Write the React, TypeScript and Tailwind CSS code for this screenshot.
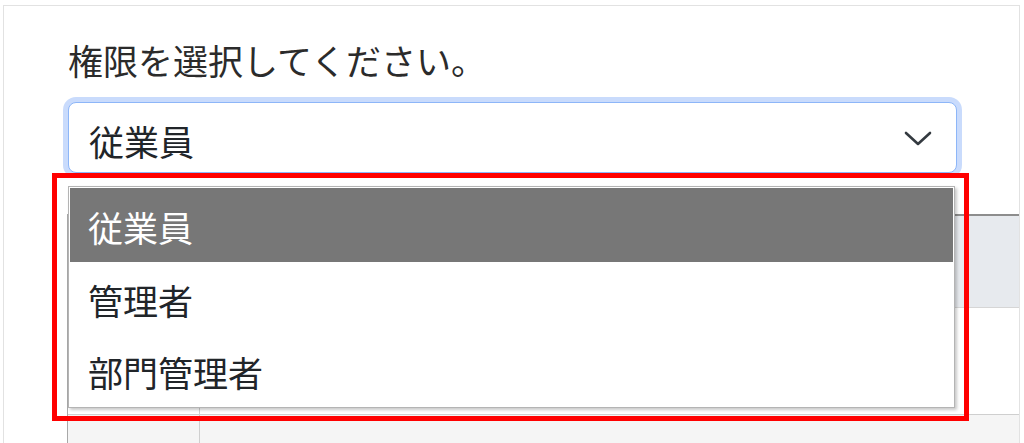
import React from "react"

const options = ["従業員", "管理者", "部門管理者"]

const Chevron: React.FC = () => (
  <svg width="28" height="16" viewBox="0 0 28 16" fill="none">
    <polyline points="2,2 14,13 26,2" stroke="#343a40" strokeWidth="2.6" strokeLinecap="round" strokeLinejoin="round" />
  </svg>
)

const App: React.FC = () => {
  return (
    <div className="w-[1024px] h-[443px] bg-white overflow-hidden font-['Noto_Sans_CJK_JP',sans-serif]">
      {/* Card */}
      <div className="relative ml-[3px] mt-[5px] w-[1017px] h-[460px] border border-[#e2e2e2] pl-[64px] pt-[33px]">
        {/* Label */}
        <div className="text-[35px] leading-[41px] text-[#2b2b2b]">権限を選択してください。</div>

        {/* Select */}
        <div className="relative mt-[22px] w-[889px]">
          <div className="h-[71px] rounded-[8px] border-[1.5px] border-[#8db6f8] shadow-[0_0_0_5px_#c9dbfc] bg-white flex items-center justify-between pl-[20px] pr-[24px] pt-[6px]">
            <span className="text-[35px] leading-[41px] text-[#212529]">従業員</span>
            <span className="-mt-[4px]">
              <Chevron />
            </span>
          </div>

          {/* Dropdown list */}
          <div className="absolute left-0 top-[84px] z-20 w-[887px] border border-[#b4b4b4] bg-white p-[1px] shadow-[2px_2px_3px_rgba(0,0,0,0.22)]">
            {options.map((o, i) => (
              <div
                key={o}
                className={
                  i === 0
                    ? "h-[74px] bg-[#777777] text-white flex items-center pl-[18px] pt-[2px] text-[35px] leading-[41px]"
                    : "h-[72px] bg-white text-[#212529] flex items-center pl-[18px] pt-[2px] text-[35px] leading-[41px]"
                }
              >
                {o}
              </div>
            ))}
          </div>

          {/* Red annotation frame */}
          <div className="absolute left-[-16px] top-[71px] z-30 w-[917px] h-[248px] border-[5px] border-[#ff0000]" />
        </div>

        {/* Table behind the dropdown */}
        <div className="-ml-[1px] mt-[41px] border-l border-[#a8a8a8]">
          <div className="h-[94px] border-t-2 border-[#8d8d8d] bg-[#e7eaee] border-b border-b-[#d6d6d6] flex">
            <div className="w-[132px] border-r border-[#cfcfcf]" />
            <div className="flex-1" />
          </div>
          <div className="h-[107px] bg-white border-b border-[#cfcfcf] flex">
            <div className="w-[132px] border-r border-[#cfcfcf]" />
            <div className="flex-1" />
          </div>
          <div className="h-[60px] bg-[#f5f5f5] flex">
            <div className="w-[132px] border-r border-[#cfcfcf]" />
            <div className="flex-1" />
          </div>
        </div>
      </div>
    </div>
  )
}

export default App
